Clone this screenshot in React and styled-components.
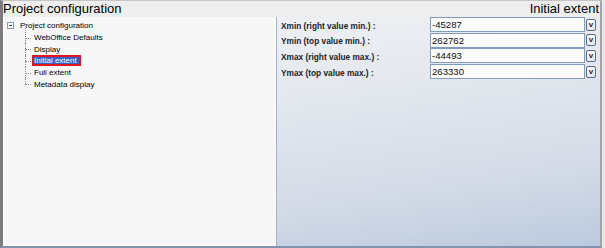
import React from 'react'
import styled, {createGlobalStyle} from 'styled-components'

const GlobalStyle = createGlobalStyle`
    html, body {
        margin: 0;
        padding: 0;
        overflow: hidden;
        background: #e8e8e8;
    }
    body {
        font-family: "Liberation Sans", Arial, sans-serif;
    }
`

const Outer = styled.div`
    width: 605px;
    height: 248px;
    padding-right: 3px;
    box-sizing: border-box;
    background: #e8e8e8;
`

const Frame = styled.div`
    width: 100%;
    height: 100%;
    box-sizing: border-box;
    display: flex;
    flex-direction: column;
    background: #eeeeee;
    border-top: 1px solid #c4c4c4;
    border-left: 3px solid #7c7c7c;
    border-right: 2px solid #a4a4a4;
    border-bottom: 2px solid #8293ad;
`

const Header = styled.div`
    height: 16px;
    flex: none;
    display: flex;
    align-items: center;
    justify-content: space-between;
    font-size: 13px;
    line-height: 16px;
    color: #000;
    padding-right: 1px;
`

const Body = styled.div`
    flex: 1;
    display: flex;
    min-height: 0;
`

const TreePanel = styled.div`
    width: 273px;
    flex: none;
    box-sizing: border-box;
    background: #f7f7f7;
    border: 1px solid #ffffff;
    border-top: none;
    padding: 3px 0 0 2px;
    font-size: 8px;
    color: #000;
`

const Row = styled.div`
    height: 11.7px;
    display: flex;
    align-items: center;
    white-space: nowrap;
`

const Toggle = styled.span`
    width: 5px;
    height: 5px;
    margin-left: 1px;
    margin-right: 6px;
    border: 1px solid #8c9cb4;
    background: #fff;
    position: relative;
    &::after {
        content: '';
        position: absolute;
        left: 1px;
        right: 1px;
        top: 2px;
        height: 1px;
        background: #2a3f6a;
    }
`

const ChildList = styled.div`
    margin-left: 19px;
`

const ChildRow = styled(Row)`
    position: relative;
    padding-left: 7px;
    &::before {
        content: '';
        position: absolute;
        left: 0;
        width: 6px;
        top: 50%;
        border-top: 1px dotted #8a8a8a;
    }
    &::after {
        content: '';
        position: absolute;
        left: 0;
        top: 0;
        height: ${p => p.last ? '50%' : '100%'};
        border-left: 1px dotted #8a8a8a;
    }
    &:first-child::after {
        top: -4px;
        height: calc(100% + 4px);
    }
`

const Label = styled.span`
    box-sizing: border-box;
    height: 11px;
    line-height: 7px;
    padding: 0 2px 0 0;
    border: 2px solid ${p => p.selected ? '#e3161b' : 'transparent'};
    background: ${p => p.selected ? '#2f63c9' : 'transparent'};
    color: ${p => p.selected ? '#fff' : '#000'};
`

const ContentPanel = styled.div`
    flex: 1;
    border-left: 1px solid #9fb0c8;
    background: linear-gradient(172deg, #eef0f3 0%, #e2e7ee 35%, #d3dbe7 70%, #bccade 100%);
`

const Form = styled.div`
    display: grid;
    grid-template-columns: 149px 155px 11px;
    row-gap: 0.7px;
    padding-left: 4px;
`

const FieldLabel = styled.div`
    height: 15px;
    display: flex;
    align-items: center;
    padding-top: 2px;
    box-sizing: border-box;
    font-size: 8.3px;
    font-weight: bold;
    color: #1c1c1c;
    white-space: nowrap;
`

const Input = styled.div`
    height: 15px;
    box-sizing: border-box;
    border: 1px solid #7f9bbd;
    background: #fbfbfb;
    font-size: 9.6px;
    line-height: 13px;
    padding-left: 1px;
    color: #111;
`

const DropButton = styled.div`
    align-self: center;
    width: 10px;
    height: 12px;
    margin-left: 1px;
    box-sizing: border-box;
    border: 1px solid #55698a;
    border-radius: 2px;
    background: linear-gradient(#ffffff, #e4e6ea);
    display: flex;
    align-items: center;
    justify-content: center;
    font-size: 8px;
    font-weight: bold;
    color: #1b2a4c;
    line-height: 1;
`

const children = ['WebOffice Defaults', 'Display', 'Initial extent', 'Full extent', 'Metadata display']

const fields = [
    {label: 'Xmin (right value min.) :', value: '-45287'},
    {label: 'Ymin (top value min.) :', value: '262762'},
    {label: 'Xmax (right value max.) :', value: '-44493'},
    {label: 'Ymax (top value max.) :', value: '263330'}
]

export default function App() {
    return (
        <Outer>
            <GlobalStyle/>
            <Frame>
                <Header>
                    <span>Project configuration</span>
                    <span>Initial extent</span>
                </Header>
                <Body>
                    <TreePanel>
                        <Row>
                            <Toggle/>
                            <span>Project configuration</span>
                        </Row>
                        <ChildList>
                            {children.map((c, i) => (
                                <ChildRow key={c} last={i == children.length - 1}>
                                    <Label selected={c == 'Initial extent'}>{c}</Label>
                                </ChildRow>
                            ))}
                        </ChildList>
                    </TreePanel>
                    <ContentPanel>
                        <Form>
                            {fields.map(f => (
                                <React.Fragment key={f.label}>
                                    <FieldLabel>{f.label}</FieldLabel>
                                    <Input>{f.value}</Input>
                                    <DropButton>v</DropButton>
                                </React.Fragment>
                            ))}
                        </Form>
                    </ContentPanel>
                </Body>
            </Frame>
        </Outer>
    )
}
